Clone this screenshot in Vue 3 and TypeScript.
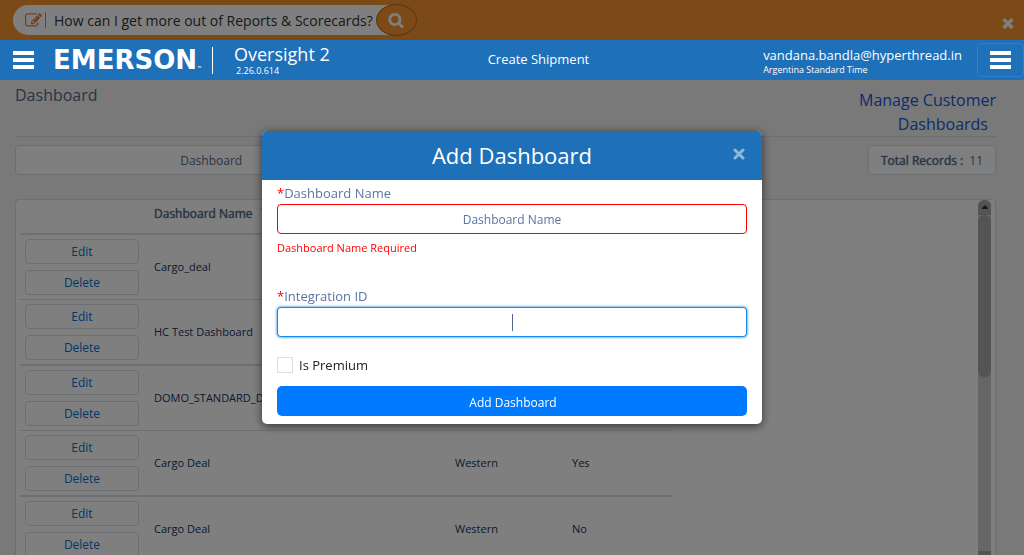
<script setup lang="ts">
import { onMounted, ref } from 'vue'

interface DashboardRow {
  name: string
  region: string
  premium: string
}

const rows: DashboardRow[] = [
  { name: 'Cargo_deal', region: '', premium: '' },
  { name: 'HC Test Dashboard', region: '', premium: '' },
  { name: 'DOMO_STANDARD_D', region: '', premium: '' },
  { name: 'Cargo Deal', region: 'Western', premium: 'Yes' },
  { name: 'Cargo Deal', region: 'Western', premium: 'No' },
]

const question = ref('How can I get more out of Reports & Scorecards?')
const filter = ref('')
const dashboardName = ref('')
const integrationId = ref('')
const isPremium = ref(false)
const integrationInput = ref<HTMLInputElement | null>(null)

onMounted(() => integrationInput.value?.focus())
</script>

<template>
  <div class="page">
    <div class="banner">
      <form class="ask" @submit.prevent>
        <svg class="ask-edit" viewBox="0 0 1792 1792" aria-hidden="true"><path d="M888 1184l116-116-152-152-116 116v56h96v96h56zm440-720q-16-16-33 1l-350 350q-17 17-1 33t33-1l350-350q17-17 1-33zm80 594v190q0 119-84.5 203.5t-203.5 84.5h-832q-119 0-203.5-84.5t-84.5-203.5v-832q0-119 84.5-203.5t203.5-84.5h832q63 0 117 25 15 7 18 23 3 17-9 29l-49 49q-14 14-32 8-23-6-45-6h-832q-66 0-113 47t-47 113v832q0 66 47 113t113 47h832q66 0 113-47t47-113v-126q0-13 9-22l64-64q15-15 35-7t20 29zm-96-738l288 288-672 672h-288v-288zm444 132l-92 92-288-288 92-92q28-28 68-28t68 28l152 152q28 28 28 68t-28 68z" /></svg>
        <span class="ask-divider"></span>
        <input v-model="question" class="ask-input" type="text" aria-label="Ask a question" />
        <button class="ask-button" type="submit" aria-label="Search">
          <svg viewBox="0 0 1792 1792" aria-hidden="true"><path d="M1216 832q0-185-131.5-316.5t-316.5-131.5-316.5 131.5-131.5 316.5 131.5 316.5 316.5 131.5 316.5-131.5 131.5-316.5zm512 832q0 52-38 90t-90 38q-54 0-90-38l-343-342q-179 124-399 124-143 0-273.5-55.5t-225-150-150-225-55.5-273.5 55.5-273.5 150-225 225-150 273.5-55.5 273.5 55.5 225 150 150 225 55.5 273.5q0 220-124 399l343 343q37 37 37 90z" /></svg>
        </button>
      </form>
      <button class="banner-close" type="button" aria-label="Close banner">
        <svg viewBox="0 0 1792 1792" aria-hidden="true"><path d="M1490 1322q0 40-28 68l-136 136q-28 28-68 28t-68-28l-294-294-294 294q-28 28-68 28t-68-28l-136-136q-28-28-28-68t28-68l294-294-294-294q-28-28-28-68t28-68l136-136q28-28 68-28t68 28l294 294 294-294q28-28 68-28t68 28l136 136q28 28 28 68t-28 68l-294 294 294 294q28 28 28 68z" /></svg>
      </button>
    </div>

    <header class="navbar">
      <button class="menu" type="button" aria-label="Main menu"><span class="bars"><i></i><i></i><i></i></span></button>
      <div class="logo">EMERSON<small>™</small></div>
      <div class="product">
        <span class="product-name">Oversight 2</span>
        <span class="product-version">2.26.0.614</span>
      </div>
      <a class="create" href="#">Create Shipment</a>
      <div class="account">
        <span class="account-mail">vandana.bandla@hyperthread.in</span>
        <span class="account-zone">Argentina Standard Time</span>
      </div>
      <button class="user-menu" type="button" aria-label="User menu"><span class="bars"><i></i><i></i><i></i></span></button>
    </header>

    <main class="content">
      <div class="heading">
        <h1>Dashboard</h1>
        <a class="manage" href="#">Manage Customer <span>Dashboards</span></a>
      </div>
      <div class="filters">
        <input v-model="filter" class="filter" type="text" placeholder="Dashboard" aria-label="Dashboard filter" />
        <div class="total"><b>Total Records :</b><span>11</span></div>
      </div>
      <section class="card">
        <table class="grid">
          <colgroup><col class="col-actions" /><col class="col-name" /><col class="col-region" /><col class="col-premium" /></colgroup>
          <thead>
            <tr><th></th><th>Dashboard Name<svg class="sort" viewBox="0 0 8 5" aria-hidden="true"><path d="M0 0h8L4 5z" /></svg></th><th></th><th></th></tr>
          </thead>
          <tbody>
            <tr v-for="(row, i) in rows" :key="i">
              <td class="actions">
                <div class="action-list">
                  <button type="button">Edit</button>
                  <button type="button">Delete</button>
                </div>
              </td>
              <td>{{ row.name }}</td>
              <td>{{ row.region }}</td>
              <td>{{ row.premium }}</td>
            </tr>
          </tbody>
        </table>
        <div class="track" aria-hidden="true">
          <span class="track-end"><svg viewBox="0 0 6 5"><path d="M3 0L6 3V4H0V3z" /></svg></span>
          <span class="thumb"></span>
          <span class="track-end bottom"><svg viewBox="0 0 6 5"><path d="M3 0L6 3V4H0V3z" /></svg></span>
        </div>
      </section>
    </main>

    <div class="overlay">
      <div class="modal" role="dialog" aria-modal="true" aria-labelledby="modal-title">
        <div class="modal-head">
          <h2 id="modal-title">Add Dashboard</h2>
          <button class="modal-close" type="button" aria-label="Close"><svg viewBox="0 0 12 12" aria-hidden="true"><path d="M2 2L10 10M10 2L2 10" /></svg></button>
        </div>
        <form class="modal-body" @submit.prevent>
          <label for="name"><em>*</em>Dashboard Name</label>
          <input id="name" v-model="dashboardName" class="field invalid" type="text" placeholder="Dashboard Name" aria-describedby="name-error" />
          <p id="name-error" class="error">Dashboard Name Required</p>
          <label for="integration"><em>*</em>Integration ID</label>
          <div class="field-wrap">
            <input id="integration" ref="integrationInput" v-model="integrationId" class="field active" type="text" />
            <span v-if="!integrationId" class="caret"></span>
          </div>
          <label class="check"><input v-model="isPremium" type="checkbox" />Is Premium</label>
          <button class="submit" type="submit">Add Dashboard</button>
        </form>
      </div>
    </div>
  </div>
</template>

<style>
body {
  margin: 0;
  overflow: hidden;
}
</style>

<style scoped>
.page {
  height: 100vh;
  overflow: hidden;
  background: #f2f2f2;
  color: #54698d;
  font-family: "Open Sans", "Noto Sans", sans-serif;
  font-size: 13px;
}
.page *, .page *::before {
  box-sizing: border-box;
}
button, input {
  font-family: inherit;
  margin: 0;
}
a {
  text-decoration: none;
}
.banner {
  display: flex;
  justify-content: space-between;
  align-items: center;
  height: 40px;
  padding: 0 8px 0 13px;
  background: #f7942d;
}
.ask {
  display: flex;
  align-items: center;
  height: 30px;
  width: 404px;
  padding-left: 12px;
  border-radius: 15px;
  background: linear-gradient(90deg, #fff 380px, transparent 380px);
}
.ask-edit {
  width: 17px;
  height: 17px;
  fill: #e07a40;
}
.ask-divider {
  width: 1px;
  height: 16px;
  margin-left: 3px;
  background: #e07a40;
}
.ask-input {
  flex: 1;
  min-width: 0;
  height: 26px;
  padding: 0 0 0 8px;
  border: 0;
  background: transparent;
  color: #333;
  font-size: 14px;
  outline: 0;
}
.ask-button {
  display: grid;
  place-items: center;
  width: 41px;
  height: 32px;
  padding: 0 2px 0 0;
  border: 1px solid #b86c1e;
  border-radius: 50%;
  background: #f7942d;
}
.ask-button svg {
  width: 16px;
  height: 16px;
  fill: #fff;
  stroke: #fff;
  stroke-width: 60;
}
.banner-close {
  width: 16px;
  height: 16px;
  margin-top: 5px;
  padding: 0;
  border: 0;
  background: none;
}
.banner-close svg {
  display: block;
  width: 16px;
  height: 16px;
  fill: #fff;
}
.navbar {
  position: relative;
  z-index: 2;
  display: flex;
  align-items: center;
  height: 40px;
  padding-left: 13px;
  background: #1e70b9;
  color: #fff;
}
.bars {
  display: flex;
  flex-direction: column;
  justify-content: space-between;
  width: 21px;
  height: 18px;
}
.bars i {
  height: 4px;
  background: #fff;
}
.menu {
  padding: 0;
  border: 0;
  background: none;
}
.logo {
  display: flex;
  align-items: flex-end;
  width: 160px;
  height: 27px;
  margin-left: 19px;
  padding-bottom: 2px;
  border-right: 1px solid #fff;
  font: 700 26px/24px "DejaVu Sans", sans-serif;
}
.logo small {
  font-size: 5px;
  line-height: 8px;
}
.product {
  display: flex;
  flex-direction: column;
  margin-left: 21px;
  padding-bottom: 2px;
}
.product-name {
  font-size: 18px;
  line-height: 24px;
}
.product-version {
  padding-left: 2px;
  font-size: 9px;
  line-height: 10px;
}
.create {
  margin: 0 auto;
  padding: 0 16px 2px 0;
  color: #fff;
}
.account {
  display: flex;
  flex-direction: column;
  margin-right: 15px;
  padding-top: 2px;
}
.account-mail {
  line-height: 18px;
}
.account-zone {
  font-size: 9px;
  line-height: 12px;
}
.user-menu {
  display: grid;
  place-items: center;
  width: 47px;
  height: 34px;
  padding: 0;
  border: 1px solid #2f80c8;
  border-radius: 4px;
  background: none;
}
.content {
  padding: 0 28px 0 15px;
}
.heading {
  display: flex;
  justify-content: space-between;
  height: 57px;
  border-bottom: 1px solid #d8dde6;
}
h1 {
  margin: 0;
  padding-top: 3px;
  font-weight: 400;
  font-size: 16px;
  line-height: 24px;
}
.manage {
  width: 160px;
  padding-top: 8px;
  color: #1659dc;
  font-size: 16px;
  line-height: 24px;
  text-align: right;
}
.manage span {
  padding-right: 8px;
}
.filters {
  display: flex;
  justify-content: space-between;
  margin-top: 8px;
}
.filter {
  width: 40%;
  height: 30px;
  border: 1px solid #d8dde6;
  border-radius: 4px;
  background: #fff;
  font-size: 12px;
  text-align: center;
}
.filter::placeholder {
  color: #54698d;
  opacity: 1;
}
.total {
  display: flex;
  align-items: center;
  gap: 6px;
  height: 30px;
  padding: 0 12px;
  border: 1px solid #d8dde6;
  border-radius: 4px;
  background: #fff;
  font-size: 12px;
}
.total b, .grid th {
  font-weight: 400;
  text-shadow: 0 0 1px currentColor;
}
.card {
  display: flex;
  justify-content: space-between;
  align-items: stretch;
  margin-top: 24px;
  padding: 0 4px;
  border: 1px solid #d8dde6;
  border-radius: 4px;
  background: #fff;
}
.grid {
  width: 652px;
  margin-bottom: 4px;
  border-collapse: separate;
  border-spacing: 0;
  table-layout: fixed;
  color: #16325c;
  font-size: 11px;
}
.col-actions { width: 119px; }
.col-name { width: 301px; }
.col-region { width: 117px; }
.grid th {
  height: 35px;
  padding: 0 15px 6px;
  border-bottom: 2px solid #d8e3ee;
  color: #54698d;
  font-size: 12px;
  text-align: left;
}
.sort {
  width: 8px;
  height: 5px;
  margin: 0 0 5px 8px;
  fill: #54698d;
}
.grid td {
  padding: 0 15px 2px;
  border-bottom: 1px solid #d8dde6;
}
.grid tr:nth-child(even) td {
  border-bottom: 2px solid #d8e3ee;
}
.grid .actions {
  padding: 4px 0 4px 5px;
}
.action-list {
  display: grid;
  gap: 6px;
}
.action-list button {
  height: 25px;
  padding: 0;
  border: 1px solid #d8dde6;
  border-radius: 4px;
  background: #fff;
  color: #0070d2;
  font-size: 12px;
}
.track {
  display: flex;
  flex-direction: column;
  width: 13px;
  border-radius: 6px;
  background: #cdcdcd;
}
.track-end {
  display: grid;
  place-items: center;
  height: 15px;
  border-radius: 6px 6px 0 0;
  background: #a8a8a8;
}
.track-end.bottom {
  margin-top: auto;
  border-radius: 0 0 6px 6px;
}
.track-end.bottom svg {
  transform: rotate(180deg);
}
.track-end svg {
  width: 6px;
  height: 5px;
  fill: #333;
}
.thumb {
  height: 162px;
  border-radius: 6px;
  background: #a8a8a8;
}
.overlay {
  position: fixed;
  inset: 0;
  z-index: 1;
  padding: 131px 16px 0;
  background: rgba(0, 0, 0, 0.5);
}
.modal {
  max-width: 500px;
  margin: 0 auto;
  overflow: hidden;
  border-radius: 5px;
  background: #fff;
  box-shadow: 0 2px 10px rgba(0, 0, 0, 0.6);
}
.modal-head {
  position: relative;
  display: grid;
  place-items: center;
  height: 49px;
  padding-bottom: 2px;
  background: #1e70b9;
  color: #fff;
}
h2 {
  margin: 0;
  font-weight: 400;
  font-size: 22px;
  line-height: 30px;
}
.modal-close {
  position: absolute;
  top: 17px;
  right: 17px;
  width: 12px;
  height: 12px;
  padding: 0;
  border: 0;
  background: none;
}
.modal-close svg {
  display: block;
  width: 12px;
  height: 12px;
  fill: none;
  stroke: #8eb7dc;
  stroke-width: 3;
  stroke-linecap: round;
}
.modal-body {
  display: flex;
  flex-direction: column;
  padding: 4px 15px 8px;
  color: #5a74a3;
}
.modal-body label {
  padding-bottom: 2px;
  line-height: 18px;
}
.modal-body em {
  color: #f00;
  font-style: normal;
}
.field {
  display: block;
  width: 100%;
  height: 30px;
  padding: 0 12px;
  border: 1px solid #d8dde6;
  border-radius: 4px;
  background: #fff;
  color: #5a74a3;
  font-size: 12px;
  text-align: center;
  outline: 0;
}
.field::placeholder {
  color: #5a74a3;
  opacity: 1;
}
.field.invalid {
  border-color: #f00;
}
.field.active {
  border-color: #1589ee;
  box-shadow: 0 0 3px #0070d2;
  caret-color: transparent;
}
.field-wrap {
  position: relative;
}
.caret {
  position: absolute;
  top: 7px;
  left: 50%;
  width: 1px;
  height: 17px;
  background: #54698d;
}
.error {
  margin: 4px 0 29px;
  color: #f00;
  font-size: 11px;
  line-height: 20px;
}
.modal-body .check {
  display: flex;
  align-items: center;
  gap: 6px;
  margin: 18px 0 11px;
  padding: 0;
  color: #222;
  line-height: 20px;
}
.check input {
  width: 16px;
  height: 16px;
  appearance: none;
  border: 1px solid #d8dde6;
  background: #fff;
}
.submit {
  height: 30px;
  padding: 2px 0 0 2px;
  border: 0;
  border-radius: 5px;
  background: #007bff;
  color: #fff;
  font-size: 12px;
}
</style>
